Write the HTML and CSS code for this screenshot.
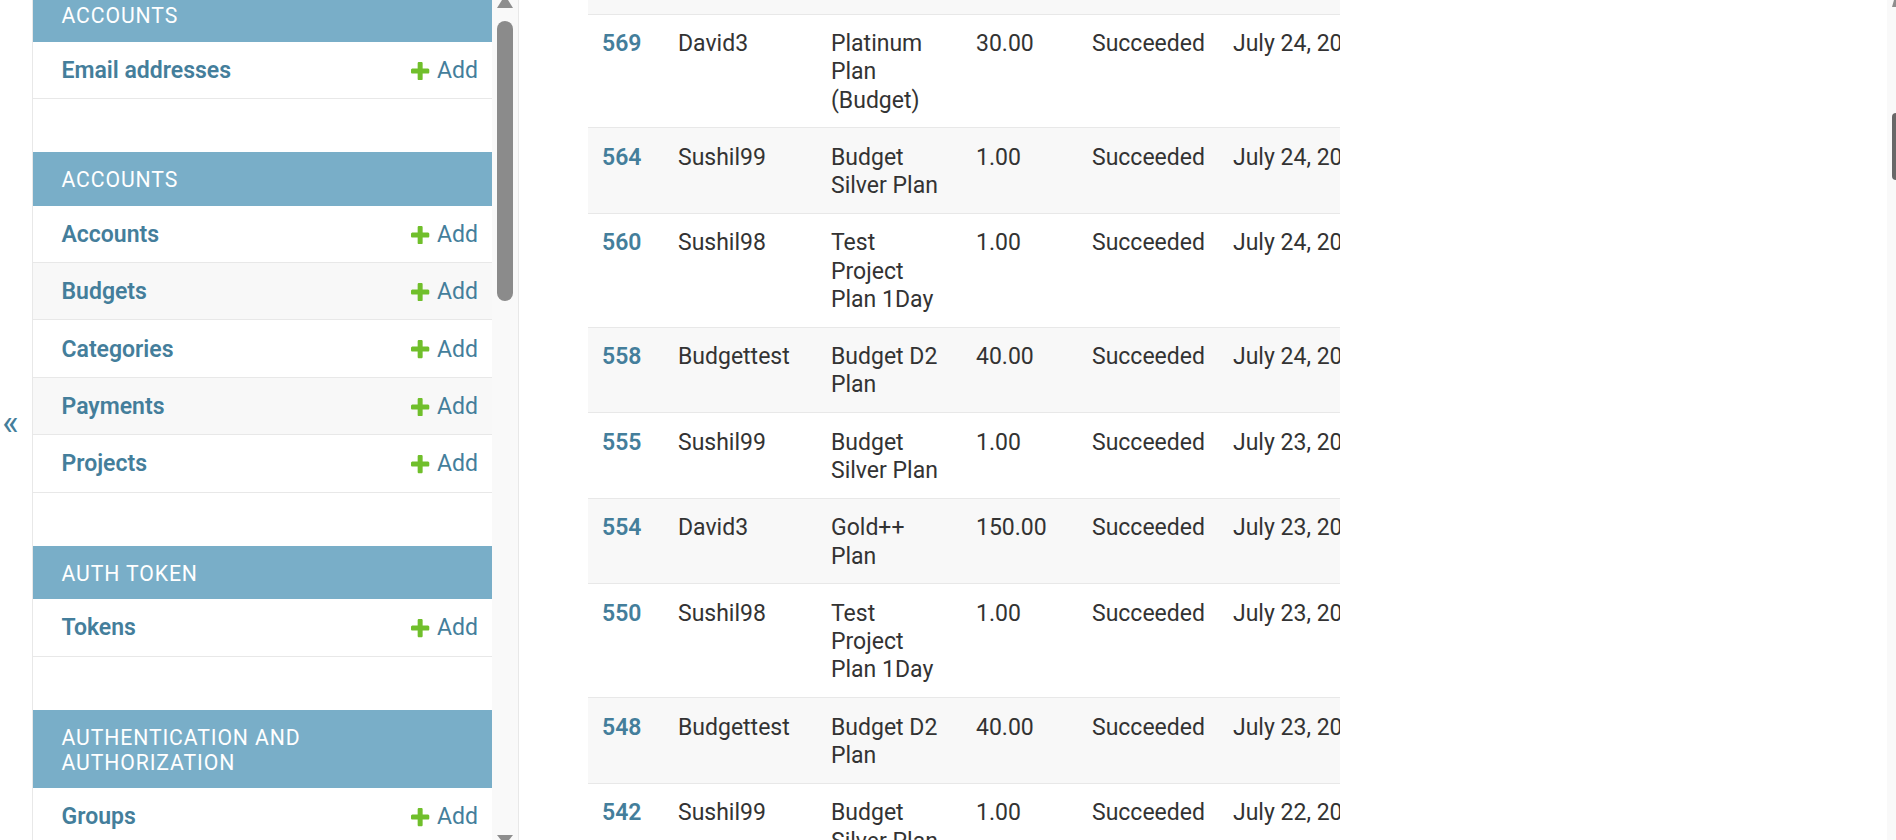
FILE: index.html
```html
<!DOCTYPE html>
<html lang="en">
<head>
<meta charset="utf-8">
<title>Payments | Django site admin</title>
<link rel="stylesheet" href="styles.css">
</head>
<body>
<div class="page">
  <button class="toggle-nav" type="button" aria-label="Toggle navigation">«</button>

  <nav class="nav-sidebar">
    <div class="nav-content">
      <div class="module first">
        <table>
          <caption>Accounts</caption>
          <tr><th><a href="#">Email addresses</a></th><td><a class="addlink" href="#"><svg class="plus" viewBox="192 192 1408 1408"><path d="M1600 796v192q0 40-28 68t-68 28h-416v416q0 40-28 68t-68 28h-192q-40 0-68-28t-28-68v-416h-416q-40 0-68-28t-28-68v-192q0-40 28-68t68-28h416v-416q0-40 28-68t68-28h192q40 0 68 28t28 68v416h416q40 0 68 28t28 68z"/></svg>Add</a></td></tr>
        </table>
      </div>

      <div class="module">
        <table>
          <caption>Accounts</caption>
          <tr><th><a href="#">Accounts</a></th><td><a class="addlink" href="#"><svg class="plus" viewBox="192 192 1408 1408"><path d="M1600 796v192q0 40-28 68t-68 28h-416v416q0 40-28 68t-68 28h-192q-40 0-68-28t-28-68v-416h-416q-40 0-68-28t-28-68v-192q0-40 28-68t68-28h416v-416q0-40 28-68t68-28h192q40 0 68 28t28 68v416h416q40 0 68 28t28 68z"/></svg>Add</a></td></tr>
          <tr class="alt"><th><a href="#">Budgets</a></th><td><a class="addlink" href="#"><svg class="plus" viewBox="192 192 1408 1408"><path d="M1600 796v192q0 40-28 68t-68 28h-416v416q0 40-28 68t-68 28h-192q-40 0-68-28t-28-68v-416h-416q-40 0-68-28t-28-68v-192q0-40 28-68t68-28h416v-416q0-40 28-68t68-28h192q40 0 68 28t28 68v416h416q40 0 68 28t28 68z"/></svg>Add</a></td></tr>
          <tr><th><a href="#">Categories</a></th><td><a class="addlink" href="#"><svg class="plus" viewBox="192 192 1408 1408"><path d="M1600 796v192q0 40-28 68t-68 28h-416v416q0 40-28 68t-68 28h-192q-40 0-68-28t-28-68v-416h-416q-40 0-68-28t-28-68v-192q0-40 28-68t68-28h416v-416q0-40 28-68t68-28h192q40 0 68 28t28 68v416h416q40 0 68 28t28 68z"/></svg>Add</a></td></tr>
          <tr class="alt"><th><a href="#">Payments</a></th><td><a class="addlink" href="#"><svg class="plus" viewBox="192 192 1408 1408"><path d="M1600 796v192q0 40-28 68t-68 28h-416v416q0 40-28 68t-68 28h-192q-40 0-68-28t-28-68v-416h-416q-40 0-68-28t-28-68v-192q0-40 28-68t68-28h416v-416q0-40 28-68t68-28h192q40 0 68 28t28 68v416h416q40 0 68 28t28 68z"/></svg>Add</a></td></tr>
          <tr><th><a href="#">Projects</a></th><td><a class="addlink" href="#"><svg class="plus" viewBox="192 192 1408 1408"><path d="M1600 796v192q0 40-28 68t-68 28h-416v416q0 40-28 68t-68 28h-192q-40 0-68-28t-28-68v-416h-416q-40 0-68-28t-28-68v-192q0-40 28-68t68-28h416v-416q0-40 28-68t68-28h192q40 0 68 28t28 68v416h416q40 0 68 28t28 68z"/></svg>Add</a></td></tr>
        </table>
      </div>

      <div class="module">
        <table>
          <caption>Auth Token</caption>
          <tr><th><a href="#">Tokens</a></th><td><a class="addlink" href="#"><svg class="plus" viewBox="192 192 1408 1408"><path d="M1600 796v192q0 40-28 68t-68 28h-416v416q0 40-28 68t-68 28h-192q-40 0-68-28t-28-68v-416h-416q-40 0-68-28t-28-68v-192q0-40 28-68t68-28h416v-416q0-40 28-68t68-28h192q40 0 68 28t28 68v416h416q40 0 68 28t28 68z"/></svg>Add</a></td></tr>
        </table>
      </div>

      <div class="module">
        <table>
          <caption>Authentication and Authorization</caption>
          <tr><th><a href="#">Groups</a></th><td><a class="addlink" href="#"><svg class="plus" viewBox="192 192 1408 1408"><path d="M1600 796v192q0 40-28 68t-68 28h-416v416q0 40-28 68t-68 28h-192q-40 0-68-28t-28-68v-416h-416q-40 0-68-28t-28-68v-192q0-40 28-68t68-28h416v-416q0-40 28-68t68-28h192q40 0 68 28t28 68v416h416q40 0 68 28t28 68z"/></svg>Add</a></td></tr>
          <tr class="alt"><th><a href="#">Users</a></th><td><a class="addlink" href="#"><svg class="plus" viewBox="192 192 1408 1408"><path d="M1600 796v192q0 40-28 68t-68 28h-416v416q0 40-28 68t-68 28h-192q-40 0-68-28t-28-68v-416h-416q-40 0-68-28t-28-68v-192q0-40 28-68t68-28h416v-416q0-40 28-68t68-28h192q40 0 68 28t28 68v416h416q40 0 68 28t28 68z"/></svg>Add</a></td></tr>
        </table>
      </div>
    </div>

    <div class="side-scroll">
      <svg class="arrow-up" viewBox="0 0 16 8"><polygon points="0,8 16,8 11,0 5,0"/></svg>
      <div class="side-thumb"></div>
      <svg class="arrow-down" viewBox="0 0 16 5"><polygon points="0,0 16,0 12,5 4,5"/></svg>
    </div>
  </nav>

  <main class="content">
    <div class="results">
      <table class="result-list">
        <colgroup>
          <col class="c-id"><col class="c-user"><col class="c-plan"><col class="c-amount"><col class="c-status"><col class="c-date">
        </colgroup>
        <tbody>
          <tr class="alt spacer"><td colspan="6"></td></tr>
          <tr><th><a href="#">569</a></th><td>David3</td><td>Platinum Plan (Budget)</td><td>30.00</td><td>Succeeded</td><td>July 24, 2023, 6:12 a.m.</td></tr>
          <tr class="alt"><th><a href="#">564</a></th><td>Sushil99</td><td>Budget Silver Plan</td><td>1.00</td><td>Succeeded</td><td>July 24, 2023, 5:48 a.m.</td></tr>
          <tr><th><a href="#">560</a></th><td>Sushil98</td><td>Test Project Plan 1Day</td><td>1.00</td><td>Succeeded</td><td>July 24, 2023, 4:20 a.m.</td></tr>
          <tr class="alt"><th><a href="#">558</a></th><td>Budgettest</td><td>Budget D2 Plan</td><td>40.00</td><td>Succeeded</td><td>July 24, 2023, 3:05 a.m.</td></tr>
          <tr><th><a href="#">555</a></th><td>Sushil99</td><td>Budget Silver Plan</td><td>1.00</td><td>Succeeded</td><td>July 23, 2023, 11:41 p.m.</td></tr>
          <tr class="alt"><th><a href="#">554</a></th><td>David3</td><td>Gold++ Plan</td><td>150.00</td><td>Succeeded</td><td>July 23, 2023, 9:27 p.m.</td></tr>
          <tr><th><a href="#">550</a></th><td>Sushil98</td><td>Test Project Plan 1Day</td><td>1.00</td><td>Succeeded</td><td>July 23, 2023, 6:02 p.m.</td></tr>
          <tr class="alt"><th><a href="#">548</a></th><td>Budgettest</td><td>Budget D2 Plan</td><td>40.00</td><td>Succeeded</td><td>July 23, 2023, 2:16 p.m.</td></tr>
          <tr><th><a href="#">542</a></th><td>Sushil99</td><td>Budget Silver Plan</td><td>1.00</td><td>Succeeded</td><td>July 22, 2023, 8:33 p.m.</td></tr>
        </tbody>
      </table>
    </div>
  </main>

  <div class="page-scroll">
    <svg class="page-arrow" viewBox="0 0 4 7"><polygon points="0,7 4,7 4,0 2,0"/></svg>
    <div class="page-thumb"></div>
  </div>
</div>
</body>
</html>
```

FILE: styles.css
```css
html, body {
  margin: 0;
  padding: 0;
  height: 100%;
  overflow: hidden;
  background: #fff;
}

body {
  font-family: Roboto, "Liberation Sans", Arial, sans-serif;
  color: #333;
}

a {
  color: #447e9b;
  text-decoration: none;
}

.page {
  display: flex;
  height: 840px;
  width: 1896px;
}

/* toggle button */
.toggle-nav {
  flex: 0 0 33px;
  width: 33px;
  height: 840px;
  border: 0;
  border-right: 1px solid #e8e8e8;
  background: #fff;
  color: #447e9b;
  font-family: Roboto, "Liberation Sans", sans-serif;
  font-size: 35px;
  padding: 6px 11px 0 0;
  display: flex;
  align-items: center;
  justify-content: center;
  cursor: pointer;
}

/* sidebar */
.nav-sidebar {
  flex: 0 0 486px;
  display: flex;
  height: 840px;
  border-right: 1px solid #e8e8e8;
  box-sizing: border-box;
  overflow: hidden;
}

.nav-content {
  flex: 0 0 459px;
  width: 459px;
  overflow: hidden;
}

.module {
  margin-bottom: 53px;
}

.module.first {
  margin-top: -12px;
}

.module table {
  width: 100%;
  border-collapse: collapse;
}

.module caption {
  caption-side: top;
  text-align: left;
  background: #79aec8;
  color: #fff;
  font-size: 21.2px;
  line-height: 25px;
  letter-spacing: 0.9px;
  text-transform: uppercase;
  font-weight: 400;
  padding: 15px 14px 13.6px 28.5px;
}

.module tr {
  background: #fff;
}

.module tr.alt {
  background: #f8f8f8;
}

.module th,
.module td {
  font-size: 23px;
  line-height: 28.2px;
  height: 28.2px;
  border-bottom: 1px solid #e8e8e8;
  vertical-align: top;
  padding: 15.2px 14px 13px;
}

.module th {
  width: 100%;
  text-align: left;
  font-weight: 600;
  padding-left: 28.5px;
}

.module td {
  white-space: nowrap;
  font-weight: 400;
}

.addlink {
  display: inline-flex;
  align-items: center;
  vertical-align: top;
  height: 28.2px;
  line-height: 28.2px;
}

.plus {
  width: 18.3px;
  height: 18.3px;
  margin-right: 7.5px;
  fill: #70bf2b;
}

/* sidebar scrollbar */
.side-scroll {
  flex: 0 0 26px;
  width: 26px;
  background: #f9f9f9;
  display: flex;
  flex-direction: column;
  align-items: center;
}

.arrow-up {
  width: 16px;
  height: 8px;
  fill: #8e8e8e;
  flex: 0 0 8px;
}

.side-thumb {
  width: 16px;
  height: 280px;
  margin-top: 13px;
  border-radius: 8px;
  background: #8b8b8b;
}

.arrow-down {
  width: 16px;
  height: 5px;
  flex: 0 0 5px;
  margin-top: auto;
  fill: #8e8e8e;
}

/* main content */
.content {
  flex: 1 1 auto;
  min-width: 0;
  padding-left: 69px;
  overflow: hidden;
}

.results {
  width: 752px;
  overflow: hidden;
}

.result-list {
  border-collapse: collapse;
  table-layout: fixed;
  width: 1031px;
}

.c-id { width: 76px; }
.c-user { width: 153px; }
.c-plan { width: 145px; }
.c-amount { width: 116px; }
.c-status { width: 141px; }
.c-date { width: 400px; }

.result-list tr {
  background: #fff;
}

.result-list tr.alt {
  background: #f8f8f8;
}

.result-list th,
.result-list td {
  font-size: 23px;
  line-height: 28.2px;
  padding: 15.6px 14px 12.6px;
  border-bottom: 1px solid #e8e8e8;
  vertical-align: top;
  text-align: left;
  color: #333;
}

.result-list th {
  font-weight: 600;
}

.result-list td:last-child {
  white-space: nowrap;
}

.result-list tr.spacer td {
  padding: 0;
  height: 13.5px;
}

/* page scrollbar */
.page-scroll {
  flex: 0 0 9px;
  width: 9px;
  background: #f9f9f9;
  display: flex;
  flex-direction: column;
  align-items: flex-end;
}

.page-arrow {
  width: 4px;
  height: 7px;
  fill: #8e8e8e;
}

.page-thumb {
  width: 4px;
  height: 67px;
  margin-top: 106px;
  background: #686868;
  border-radius: 8px 0 0 8px;
}
```
